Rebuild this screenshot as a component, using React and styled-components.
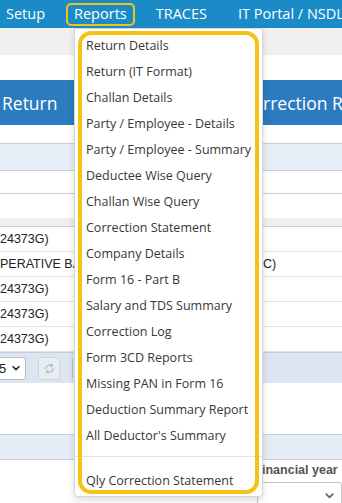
import React from 'react';
import styled, { createGlobalStyle } from 'styled-components';

const GlobalStyle = createGlobalStyle`
  html, body {
    margin: 0;
    padding: 0;
    background: #fff;
    overflow: hidden;
  }
  body {
    font-family: "Open Sans", "Noto Sans", sans-serif;
  }
`;

const navItems = [
  { label: 'Setup', gap: 13 },
  { label: 'Reports', gap: 13, active: true },
  { label: 'TRACES', gap: 15 },
  { label: 'IT Portal / NSDL', gap: 0 },
];

const reportItems = [
  'Return Details',
  'Return (IT Format)',
  'Challan Details',
  'Party / Employee - Details',
  'Party / Employee - Summary',
  'Deductee Wise Query',
  'Challan Wise Query',
  'Correction Statement',
  'Company Details',
  'Form 16 - Part B',
  'Salary and TDS Summary',
  'Correction Log',
  'Form 3CD Reports',
  'Missing PAN in Form 16',
  'Deduction Summary Report',
  "All Deductor's Summary",
];

const tableRows = [
  { left: '24373G)', right: '' },
  { left: 'PERATIVE BA', right: 'C)' },
  { left: '24373G)', right: '' },
  { left: '24373G)', right: '' },
  { left: '24373G)', right: '' },
];

function App() {
  return (
    <Page>
      <GlobalStyle />
      <NavBar>
        {navItems.map(item => (
          <NavItem key={item.label} gap={item.gap} active={item.active}>
            {item.label}
          </NavItem>
        ))}
      </NavBar>
      <SubBand />
      <Spacer height={25} />
      <TabHeader>
        <TabTitle>Return</TabTitle>
        <TabTitle>rrection Return</TabTitle>
      </TabHeader>
      <Spacer height={18} bordered />
      <Band tone="#e8eef7" height={26} />
      <Spacer height={22} bordered />
      <Spacer height={24} />
      <Band tone="#efefef" height={8} />
      {tableRows.map((row, i) => (
        // eslint-disable-next-line react/no-array-index-key
        <Row key={i}>
          <Cell>{row.left}</Cell>
          <Cell>{row.right}</Cell>
        </Row>
      ))}
      <Toolbar>
        <PageSelect>
          <span>5</span>
          <Chevron size={10} />
        </PageSelect>
        <RefreshButton>
          <svg width="11" height="11" viewBox="0 0 24 24" fill="none" stroke="#aab" strokeWidth="2.2" strokeLinecap="round">
            <path d="M20 12a8 8 0 0 1-13.6 5.7" />
            <path d="M4 12a8 8 0 0 1 13.6-5.7" />
            <path d="M17.6 2.5v3.8h-3.8" />
            <path d="M6.4 21.5v-3.8h3.8" />
          </svg>
        </RefreshButton>
        <ToolDivider />
      </Toolbar>
      <Spacer height={51} bordered />
      <Band tone="#e4ecf6" height={24} />
      <FieldRow>
        <FieldLabel>inancial year</FieldLabel>
      </FieldRow>
      <FieldRow>
        <YearSelect>
          <Chevron size={11} />
        </YearSelect>
      </FieldRow>

      <Dropdown>
        <Highlight />
        <Menu>
          {reportItems.map(item => (
            <MenuItem key={item}>{item}</MenuItem>
          ))}
          <MenuDivider />
          <MenuItem>Qly Correction Statement</MenuItem>
        </Menu>
      </Dropdown>
    </Page>
  );
}

function Chevron({ size }) {
  return (
    <svg width={size} height={size} viewBox="0 0 24 24" fill="none" stroke="#333" strokeWidth="4" strokeLinecap="round" strokeLinejoin="round">
      <path d="M5 9l7 7 7-7" />
    </svg>
  );
}

const Page = styled.div`
  position: relative;
  width: 342px;
  height: 503px;
  overflow: hidden;
  background: #fff;
`;

const NavBar = styled.div`
  display: flex;
  align-items: center;
  height: 28px;
  background: #1b8bc7;
  padding-left: 0;
`;

const NavItem = styled.div`
  box-sizing: border-box;
  flex-shrink: 0;
  height: 23px;
  display: flex;
  align-items: center;
  padding: 0 6px 1px;
  margin-right: ${props => props.gap}px;
  color: #fff;
  font-size: 14.5px;
  white-space: nowrap;
  border: 2px solid ${props => (props.active ? '#f2c318' : 'transparent')};
  border-radius: 5px;
  &:first-child {
    padding-left: 4px;
  }
`;

const SubBand = styled.div`
  height: 27px;
  background: #f0f0f0;
`;

const Spacer = styled.div`
  height: ${props => props.height}px;
  border-bottom: ${props => (props.bordered ? '1px solid #c9ced6' : 'none')};
`;

const Band = styled.div`
  height: ${props => props.height}px;
  background: ${props => props.tone};
  border-bottom: 1px solid #c9ced6;
`;

const TabHeader = styled.div`
  display: flex;
  justify-content: space-between;
  align-items: center;
  height: 45px;
  background: #2c7bbf;
  overflow: hidden;
`;

const TabTitle = styled.div`
  color: #fff;
  font-size: 17.5px;
  white-space: nowrap;
  padding-left: 2px;
  &:last-child {
    width: 79px;
    padding-left: 0;
    overflow: hidden;
  }
`;

const Row = styled.div`
  display: flex;
  justify-content: space-between;
  height: 24px;
  align-items: center;
  border-bottom: 1px solid #e2e2e2;
  font-family: "Liberation Sans", Arial, sans-serif;
  font-size: 12.5px;
  color: #222;
`;

const Cell = styled.div`
  white-space: nowrap;
  &:last-child {
    width: 79px;
  }
`;

const Toolbar = styled.div`
  display: flex;
  align-items: center;
  gap: 12px;
  height: 30px;
  background: #dbe6f2;
  border-top: 1px solid #c9ced6;
`;

const PageSelect = styled.div`
  box-sizing: border-box;
  display: flex;
  align-items: center;
  justify-content: space-between;
  width: 28px;
  height: 23px;
  margin-left: -2px;
  padding: 0 4px 0 0;
  background: #fff;
  border: 1px solid #bbb;
  border-radius: 3px;
  font-family: "Liberation Sans", Arial, sans-serif;
  font-size: 13px;
  color: #222;
`;

const RefreshButton = styled.div`
  width: 20px;
  height: 21px;
  display: flex;
  align-items: center;
  justify-content: center;
  background: #e9edf2;
  border: 1px solid #cfd6de;
  border-radius: 3px;
`;

const ToolDivider = styled.div`
  width: 1px;
  height: 20px;
  background: #b9c3cf;
`;

const FieldRow = styled.div`
  display: flex;
  justify-content: flex-end;
  align-items: center;
  height: 23px;
`;

const FieldLabel = styled.div`
  width: 80px;
  margin-top: -4px;
  font-family: "Liberation Sans", Arial, sans-serif;
  font-weight: bold;
  font-size: 12.5px;
  color: #555;
`;

const YearSelect = styled.div`
  box-sizing: border-box;
  width: 85px;
  height: 26px;
  display: flex;
  align-items: center;
  justify-content: flex-end;
  padding-right: 6px;
  margin-top: 1px;
  background: #fff;
  border: 1px solid #c6c6c6;
  border-radius: 3px;
  svg path {
    stroke: #666;
  }
`;

const Dropdown = styled.div`
  position: absolute;
  left: 74px;
  top: 28px;
  width: 189px;
  height: 469px;
  box-sizing: border-box;
  background: #fff;
  border: 1px solid #d6d6d6;
  border-radius: 0 0 4px 4px;
  box-shadow: 0 3px 7px rgba(0, 0, 0, 0.14);
`;

const Highlight = styled.div`
  position: absolute;
  left: 3px;
  top: 2px;
  right: 3px;
  bottom: 2px;
  border: 4px solid #f5c315;
  border-radius: 13px;
  pointer-events: none;
`;

const Menu = styled.div`
  display: flex;
  flex-direction: column;
  padding-top: 3px;
`;

const MenuItem = styled.div`
  height: 26px;
  display: flex;
  align-items: center;
  padding-left: 11px;
  font-size: 12.5px;
  color: #383838;
  white-space: nowrap;
`;

const MenuDivider = styled.div`
  height: 1px;
  background: #e3e3e3;
  margin: 8px 0 10px;
`;

export default App;
